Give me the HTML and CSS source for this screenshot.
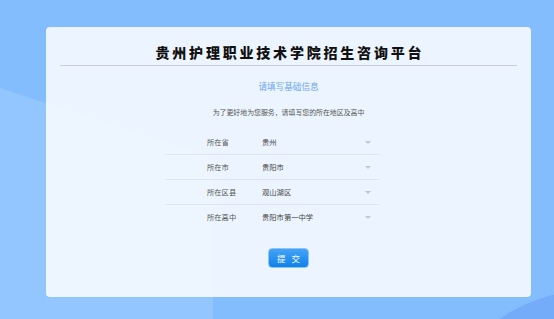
FILE: index.html
```html
<!DOCTYPE html>
<html lang="zh-CN">
<head>
    <meta charset="UTF-8">
    <meta name="viewport" content="width=device-width, initial-scale=1.0">
    <title>贵州护理职业技术学院招生咨询平台</title>
    <link rel="stylesheet" href="styles.css">
</head>
<body>
    <!-- 背景装饰 -->
    <div class="bg">
        <div class="bg-light"></div>
        <div class="bg-dark"></div>
    </div>

    <div class="card">
        <h1 class="title">贵州护理职业技术学院招生咨询平台</h1>

        <h2 class="subtitle">请填写基础信息</h2>
        <p class="tip">为了更好地为您服务，请填写您的所在地区及高中</p>

        <div class="form">
            <div class="row">
                <span class="label">所在省</span>
                <span class="value">贵州</span>
                <span class="arrow"></span>
            </div>
            <div class="row">
                <span class="label">所在市</span>
                <span class="value">贵阳市</span>
                <span class="arrow"></span>
            </div>
            <div class="row">
                <span class="label">所在区县</span>
                <span class="value">观山湖区</span>
                <span class="arrow"></span>
            </div>
            <div class="row last">
                <span class="label">所在高中</span>
                <span class="value">贵阳市第一中学</span>
                <span class="arrow"></span>
            </div>
        </div>

        <div class="actions">
            <button class="submit-btn">提 交</button>
        </div>
    </div>
</body>
</html>
```

FILE: styles.css
```css
html, body {
    margin: 0;
    height: 319px;
    overflow: hidden;
}

body {
    padding: 27px 0 0 0;
    box-sizing: border-box;
    background-color: #84bdfd;
    font-family: "Noto Sans CJK SC", "Noto Sans", sans-serif;
    position: relative;
}

/* Background shapes */
.bg {
    position: absolute;
    left: 0;
    top: 0;
    width: 554px;
    height: 319px;
    overflow: hidden;
}

.bg-light {
    position: absolute;
    left: 0;
    top: 0;
    width: 554px;
    height: 319px;
    background-color: #93c6fe;
    clip-path: polygon(0 88px, 213px 158px, 213px 319px, 0 319px);
}

.bg-dark {
    position: absolute;
    left: 0;
    top: 0;
    width: 554px;
    height: 319px;
    background: radial-gradient(ellipse 150px 80px at 620px 366px, #74acf9 99%, transparent 100%);
}

.card {
    position: relative;
    margin-left: 46px;
    width: 485px;
    height: 270px;
    box-sizing: border-box;
    padding: 0 14px;
    background-color: rgba(244, 249, 255, 0.93);
    border-radius: 4px;
    box-shadow: 0 0 1px rgba(120, 160, 220, 0.5);
}

.title {
    margin: 0;
    padding-top: 12px;
    line-height: 26px;
    font-size: 14px;
    font-weight: 900;
    letter-spacing: 2.8px;
    text-indent: 2.8px;
    text-align: center;
    color: #111;
    border-bottom: 1px solid #c9ced6;
}

.subtitle {
    margin: 14px 0 0 0;
    line-height: 12px;
    font-size: 8.6px;
    font-weight: 400;
    text-align: center;
    color: #6aa6ef;
}

.tip {
    margin: 14px 0 0 0;
    line-height: 12px;
    font-size: 6.9px;
    text-align: center;
    color: #555;
}

.form {
    width: 215px;
    margin: 12px 0 0 105px;
}

.row {
    display: flex;
    align-items: center;
    height: 24px;
    padding-left: 42px;
    border-bottom: 1px solid #dfe6ee;
    font-size: 7.3px;
}

.row.last {
    border-bottom: none;
}

.label {
    width: 55px;
    color: #555;
}

.value {
    width: 103px;
    color: #444;
}

.arrow {
    width: 0;
    height: 0;
    border-left: 3px solid transparent;
    border-right: 3px solid transparent;
    border-top: 3px solid #c3c7ce;
}

.actions {
    display: flex;
    justify-content: center;
    margin-top: 19px;
}

.submit-btn {
    width: 41px;
    height: 20px;
    padding: 0;
    border: 1px solid #8cc4fa;
    border-radius: 4px;
    background: linear-gradient(#44a3f6, #0f82ea);
    color: #fff;
    font-family: inherit;
    font-size: 8.5px;
    letter-spacing: 2px;
    text-indent: 2px;
    cursor: pointer;
}
```
